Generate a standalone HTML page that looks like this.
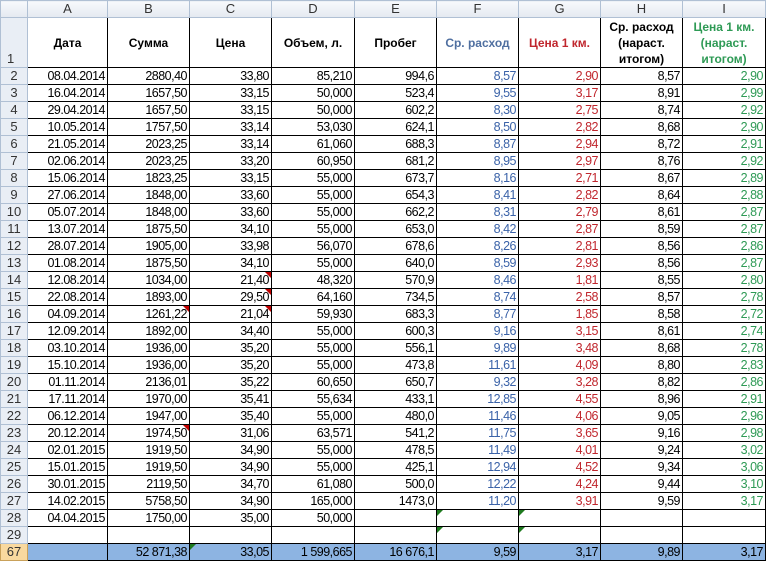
<!DOCTYPE html><html><head><meta charset="utf-8"><style>
body{margin:0;background:#fff;width:766px;height:563px;overflow:hidden;font-family:"Liberation Sans",Arial,sans-serif;font-size:12.5px}
table{border-collapse:collapse;table-layout:fixed;position:absolute;left:0;top:0}
td{padding:0 2px;height:16px;border:1px solid #000;text-align:right;white-space:nowrap;overflow:hidden;position:relative;line-height:16px;letter-spacing:-0.5px}
td.h{background:#e9eef5;border:1px solid #b0c0d4;color:#333;text-align:center;font-size:13px;letter-spacing:0}
tr.ch td{background:linear-gradient(#f7f9fc,#e4e9f0);border:1px solid #b0c0d4;color:#333;text-align:center;font-size:13px;height:16px;letter-spacing:0}
tr.hd td{height:49px;font-weight:bold;text-align:center;white-space:normal;line-height:16px;vertical-align:middle;letter-spacing:0;font-size:12px}
tr.hd td.h{vertical-align:bottom;font-weight:normal;text-align:left;padding-left:6px;font-size:13px}
.f{color:#3a62a8}.g{color:#c0262d}.i{color:#2e9a55}
tr.s td{background:#8db4e2}
tr.s td.h{background:#f9d99f;border-color:#c9a15a}
.r:after{content:"";position:absolute;right:0;top:0;border-top:6px solid #c00000;border-left:6px solid transparent}
.gr:before{content:"";position:absolute;left:0;top:0;border-top:6px solid #1e7a1e;border-right:6px solid transparent}
</style></head><body>
<table>
<colgroup><col style="width:27px"><col style="width:80px"><col style="width:82px"><col style="width:82px"><col style="width:83px"><col style="width:82px"><col style="width:82px"><col style="width:82px"><col style="width:82px"><col style="width:83px"></colgroup>
<tr class="ch"><td></td><td>A</td><td>B</td><td>C</td><td>D</td><td>E</td><td>F</td><td>G</td><td>H</td><td>I</td></tr>
<tr class="hd"><td class="h">1</td><td>Дата</td><td>Сумма</td><td>Цена</td><td>Объем, л.</td><td>Пробег</td><td class="f" style="color:#4f6fa0">Ср. расход</td><td class="g">Цена 1 км.</td><td>Ср. расход (нараст. итогом)</td><td class="i">Цена 1 км. (нараст. итогом)</td></tr>
<tr><td class="h">2</td><td>08.04.2014</td><td>2880,40</td><td>33,80</td><td>85,210</td><td>994,6</td><td class="f">8,57</td><td class="g">2,90</td><td>8,57</td><td class="i">2,90</td></tr>
<tr><td class="h">3</td><td>16.04.2014</td><td>1657,50</td><td>33,15</td><td>50,000</td><td>523,4</td><td class="f">9,55</td><td class="g">3,17</td><td>8,91</td><td class="i">2,99</td></tr>
<tr><td class="h">4</td><td>29.04.2014</td><td>1657,50</td><td>33,15</td><td>50,000</td><td>602,2</td><td class="f">8,30</td><td class="g">2,75</td><td>8,74</td><td class="i">2,92</td></tr>
<tr><td class="h">5</td><td>10.05.2014</td><td>1757,50</td><td>33,14</td><td>53,030</td><td>624,1</td><td class="f">8,50</td><td class="g">2,82</td><td>8,68</td><td class="i">2,90</td></tr>
<tr><td class="h">6</td><td>21.05.2014</td><td>2023,25</td><td>33,14</td><td>61,060</td><td>688,3</td><td class="f">8,87</td><td class="g">2,94</td><td>8,72</td><td class="i">2,91</td></tr>
<tr><td class="h">7</td><td>02.06.2014</td><td>2023,25</td><td>33,20</td><td>60,950</td><td>681,2</td><td class="f">8,95</td><td class="g">2,97</td><td>8,76</td><td class="i">2,92</td></tr>
<tr><td class="h">8</td><td>15.06.2014</td><td>1823,25</td><td>33,15</td><td>55,000</td><td>673,7</td><td class="f">8,16</td><td class="g">2,71</td><td>8,67</td><td class="i">2,89</td></tr>
<tr><td class="h">9</td><td>27.06.2014</td><td>1848,00</td><td>33,60</td><td>55,000</td><td>654,3</td><td class="f">8,41</td><td class="g">2,82</td><td>8,64</td><td class="i">2,88</td></tr>
<tr><td class="h">10</td><td>05.07.2014</td><td>1848,00</td><td>33,60</td><td>55,000</td><td>662,2</td><td class="f">8,31</td><td class="g">2,79</td><td>8,61</td><td class="i">2,87</td></tr>
<tr><td class="h">11</td><td>13.07.2014</td><td>1875,50</td><td>34,10</td><td>55,000</td><td>653,0</td><td class="f">8,42</td><td class="g">2,87</td><td>8,59</td><td class="i">2,87</td></tr>
<tr><td class="h">12</td><td>28.07.2014</td><td>1905,00</td><td>33,98</td><td>56,070</td><td>678,6</td><td class="f">8,26</td><td class="g">2,81</td><td>8,56</td><td class="i">2,86</td></tr>
<tr><td class="h">13</td><td>01.08.2014</td><td>1875,50</td><td>34,10</td><td>55,000</td><td>640,0</td><td class="f">8,59</td><td class="g">2,93</td><td>8,56</td><td class="i">2,87</td></tr>
<tr><td class="h">14</td><td>12.08.2014</td><td>1034,00</td><td class="r">21,40</td><td>48,320</td><td>570,9</td><td class="f">8,46</td><td class="g">1,81</td><td>8,55</td><td class="i">2,80</td></tr>
<tr><td class="h">15</td><td>22.08.2014</td><td>1893,00</td><td class="r">29,50</td><td>64,160</td><td>734,5</td><td class="f">8,74</td><td class="g">2,58</td><td>8,57</td><td class="i">2,78</td></tr>
<tr><td class="h">16</td><td>04.09.2014</td><td class="r">1261,22</td><td class="r">21,04</td><td>59,930</td><td>683,3</td><td class="f">8,77</td><td class="g">1,85</td><td>8,58</td><td class="i">2,72</td></tr>
<tr><td class="h">17</td><td>12.09.2014</td><td>1892,00</td><td>34,40</td><td>55,000</td><td>600,3</td><td class="f">9,16</td><td class="g">3,15</td><td>8,61</td><td class="i">2,74</td></tr>
<tr><td class="h">18</td><td>03.10.2014</td><td>1936,00</td><td>35,20</td><td>55,000</td><td>556,1</td><td class="f">9,89</td><td class="g">3,48</td><td>8,68</td><td class="i">2,78</td></tr>
<tr><td class="h">19</td><td>15.10.2014</td><td>1936,00</td><td>35,20</td><td>55,000</td><td>473,8</td><td class="f">11,61</td><td class="g">4,09</td><td>8,80</td><td class="i">2,83</td></tr>
<tr><td class="h">20</td><td>01.11.2014</td><td>2136,01</td><td>35,22</td><td>60,650</td><td>650,7</td><td class="f">9,32</td><td class="g">3,28</td><td>8,82</td><td class="i">2,86</td></tr>
<tr><td class="h">21</td><td>17.11.2014</td><td>1970,00</td><td>35,41</td><td>55,634</td><td>433,1</td><td class="f">12,85</td><td class="g">4,55</td><td>8,96</td><td class="i">2,91</td></tr>
<tr><td class="h">22</td><td>06.12.2014</td><td>1947,00</td><td>35,40</td><td>55,000</td><td>480,0</td><td class="f">11,46</td><td class="g">4,06</td><td>9,05</td><td class="i">2,96</td></tr>
<tr><td class="h">23</td><td>20.12.2014</td><td class="r">1974,50</td><td>31,06</td><td>63,571</td><td>541,2</td><td class="f">11,75</td><td class="g">3,65</td><td>9,16</td><td class="i">2,98</td></tr>
<tr><td class="h">24</td><td>02.01.2015</td><td>1919,50</td><td>34,90</td><td>55,000</td><td>478,5</td><td class="f">11,49</td><td class="g">4,01</td><td>9,24</td><td class="i">3,02</td></tr>
<tr><td class="h">25</td><td>15.01.2015</td><td>1919,50</td><td>34,90</td><td>55,000</td><td>425,1</td><td class="f">12,94</td><td class="g">4,52</td><td>9,34</td><td class="i">3,06</td></tr>
<tr><td class="h">26</td><td>30.01.2015</td><td>2119,50</td><td>34,70</td><td>61,080</td><td>500,0</td><td class="f">12,22</td><td class="g">4,24</td><td>9,44</td><td class="i">3,10</td></tr>
<tr><td class="h">27</td><td>14.02.2015</td><td>5758,50</td><td>34,90</td><td>165,000</td><td>1473,0</td><td class="f">11,20</td><td class="g">3,91</td><td>9,59</td><td class="i">3,17</td></tr>
<tr><td class="h">28</td><td>04.04.2015</td><td>1750,00</td><td>35,00</td><td>50,000</td><td></td><td class="gr"></td><td class="gr"></td><td></td><td></td></tr>
<tr><td class="h">29</td><td></td><td></td><td></td><td></td><td></td><td class="gr"></td><td class="gr"></td><td></td><td></td></tr>
<tr class="s"><td class="h">67</td><td></td><td>52 871,38</td><td class="gr">33,05</td><td>1 599,665</td><td>16 676,1</td><td>9,59</td><td>3,17</td><td>9,89</td><td>3,17</td></tr>
</table>
</body></html>
